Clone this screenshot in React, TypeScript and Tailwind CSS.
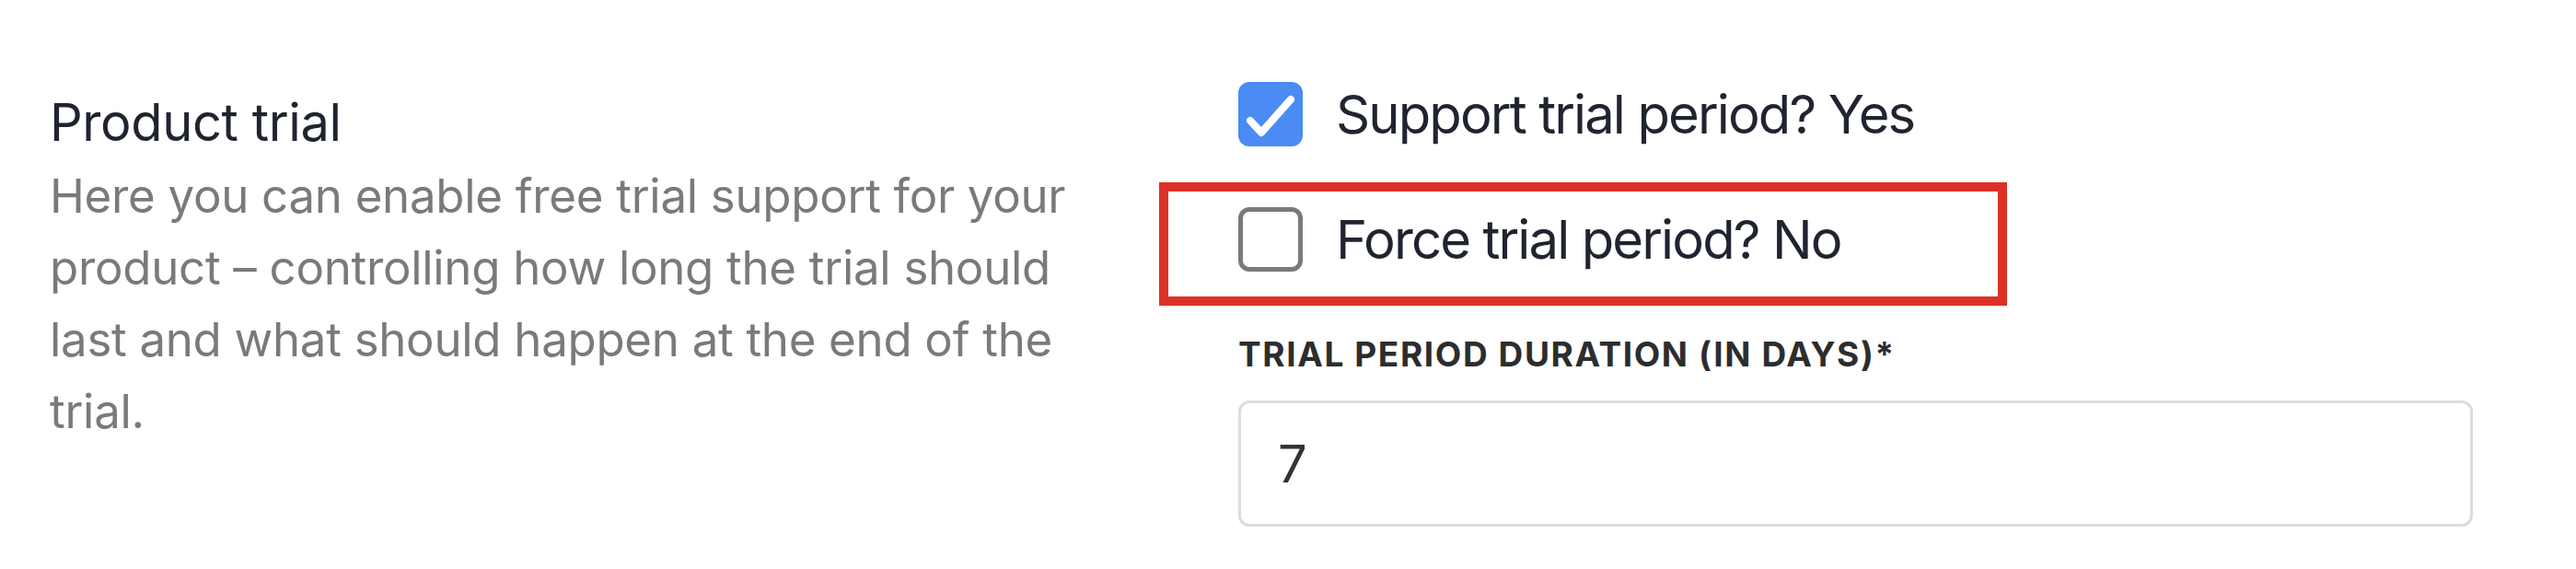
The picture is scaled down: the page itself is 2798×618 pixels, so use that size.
import React from 'react';

const CheckIcon = () => (
  <svg viewBox="0 0 70 70" className="h-full w-full">
    <polyline
      points="13,42 25,55 57,19"
      fill="none"
      stroke="white"
      strokeWidth="8"
      strokeLinecap="round"
      strokeLinejoin="round"
    />
  </svg>
);

const CheckRow = ({ checked, label, value }: { checked: boolean; label: string; value: string }) => (
  <div className="flex items-center gap-[36px]">
    {checked ? (
      <span className="flex h-[70px] w-[70px] shrink-0 items-center justify-center rounded-[12px] bg-[#4b8bf4]">
        <CheckIcon />
      </span>
    ) : (
      <span className="h-[70px] w-[70px] shrink-0 rounded-[12px] border-[5px] border-[#7a7a7a] bg-white" />
    )}
    <span className="text-[58px] leading-[70px] tracking-[-1.9px] text-[#1f2430]">
      {label} {value}
    </span>
  </div>
);

export default function App() {
  return (
    <div className="min-h-[618px] w-full bg-white font-['Inter','Liberation_Sans',sans-serif]">
      <div className="flex items-start pl-[54px] pt-[89px]">
        {/* left: section description */}
        <div className="mt-[10px] w-[1123px] shrink-0">
          <h2 className="text-[56px] leading-[68px] font-normal tracking-[-0.4px] text-[#1f2430]">Product trial</h2>
          <p className="mt-[7px] text-[51px] leading-[78px] tracking-[-0.3px] text-[#7a7a7a]">
            Here you can enable free trial support for your product – controlling how long the trial should last and
            what should happen at the end of the trial.
          </p>
        </div>

        {/* right: settings */}
        <div className="ml-[168px] w-[1341px] shrink-0">
          <CheckRow checked label="Support trial period?" value="Yes" />

          <div className="relative mt-[66px]">
            <CheckRow checked={false} label="Force trial period?" value="No" />
            {/* annotation box */}
            <div className="pointer-events-none absolute left-[-86px] top-[-27px] h-[134px] w-[921px] border-[10px] border-[#dd3128]" />
          </div>

          <label className="mt-[68px] block text-[37px] leading-[44px] font-bold uppercase tracking-[1.6px] text-[#2d2d2d]">
            Trial period duration (in days)*
          </label>
          <div className="mt-[28px] flex h-[137px] w-[1341px] items-center rounded-[12px] border-[3px] border-[#dcdcdc] bg-white pl-[40px]">
            <span className="text-[56px] text-[#333333]">7</span>
          </div>
        </div>
      </div>
    </div>
  );
}
